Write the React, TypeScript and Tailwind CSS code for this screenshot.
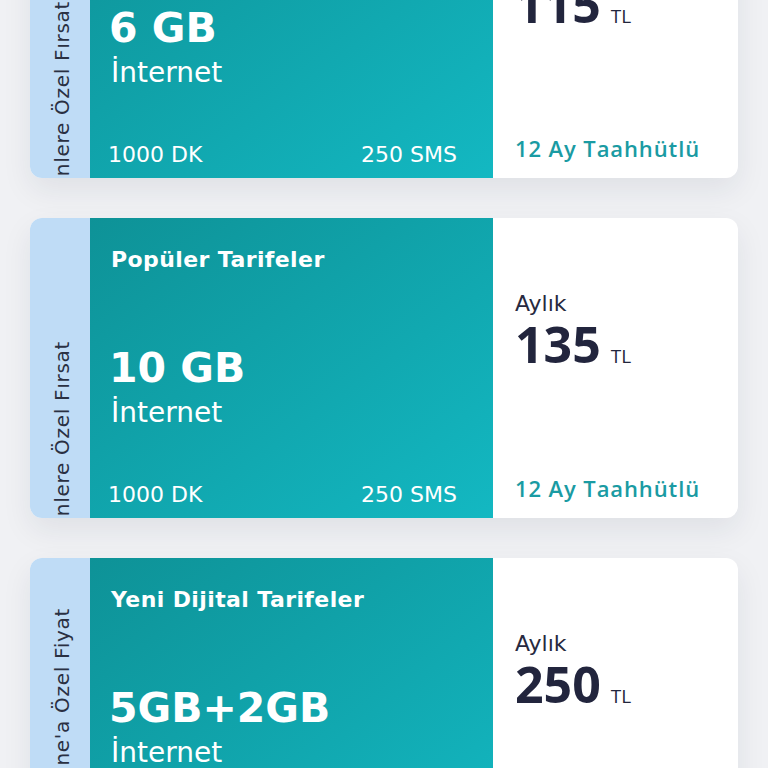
import React from "react";

type Tariff = {
  ribbon: string;
  ribbonTop: number;
  title?: string;
  data: string;
  minutes: string;
  sms: string;
  price: string;
};

const TARIFFS: Tariff[] = [
  {
    ribbon: "Sadece Dijitalde Gelenlere Özel Fırsat",
    ribbonTop: 123,
    title: "",
    data: "6 GB",
    minutes: "1000 DK",
    sms: "250 SMS",
    price: "115",
  },
  {
    ribbon: "Sadece Dijitalde Gelenlere Özel Fırsat",
    ribbonTop: 123,
    title: "Popüler Tarifeler",
    data: "10 GB",
    minutes: "1000 DK",
    sms: "250 SMS",
    price: "135",
  },
  {
    ribbon: "Online'a Özel Fiyat",
    ribbonTop: 50,
    title: "Yeni Dijital Tarifeler",
    data: "5GB+2GB",
    minutes: "1000 DK",
    sms: "250 SMS",
    price: "250",
  },
];

function TariffCard({ t }: { t: Tariff }) {
  return (
    <div className="flex h-[300px] w-[708px] shrink-0 overflow-hidden rounded-[12px] bg-white shadow-[0_12px_30px_rgba(30,40,70,0.08)]">
      <div className="relative w-[60px] shrink-0 overflow-hidden bg-[#bfdcf6]">
        <div
          className="absolute left-[20px] rotate-180 whitespace-nowrap text-[20px] leading-[24px] tracking-[0.7px] text-[#2a3042] [writing-mode:vertical-rl]"
          style={{ top: t.ribbonTop }}
        >
          {t.ribbon}
        </div>
      </div>
      <div className="flex w-[403px] shrink-0 flex-col bg-gradient-to-br from-[#0e9297] to-[#13b8c2] pl-[21px] pr-[36px] pt-[28px] pb-[9px] text-white">
        <div className="h-[28px] text-[22px] font-bold leading-[28px] tracking-[0.4px]">{t.title}</div>
        <div className="-ml-[2px] mt-[71px] text-[41px] font-bold leading-[46px]">{t.data}</div>
        <div className="mt-[5px] text-[28px] leading-[34px]">İnternet</div>
        <div className="mt-auto flex items-baseline justify-between text-[22px] leading-[28px]">
          <span className="-ml-[3px]">{t.minutes}</span>
          <span>{t.sms}</span>
        </div>
      </div>
      <div className="flex flex-1 flex-col pl-[22px] pt-[72px] pb-[16px]">
        <div className="text-[22px] leading-[28px] text-[#272a3f]">Aylık</div>
        <div className="flex items-baseline font-['Open_Sans',sans-serif] text-[#22253d]">
          <span className="text-[50px] font-bold leading-[52px]">{t.price}</span>
          <span className="ml-[10px] text-[19px] leading-[24px]">TL</span>
        </div>
        <div className="mt-auto font-['Open_Sans',sans-serif] text-[22px] font-semibold leading-[28px] tracking-[0.9px] text-[#1a9ba3]">
          12 Ay Taahhütlü
        </div>
      </div>
    </div>
  );
}

export default function App() {
  return (
    <div className="h-[768px] w-[768px] overflow-hidden bg-[#f0f1f4] font-['DejaVu_Sans',sans-serif]">
      <div className="-mt-[122px] flex flex-col gap-[40px] px-[30px]">
        {TARIFFS.map((t, i) => (
          <TariffCard key={i} t={t} />
        ))}
      </div>
    </div>
  );
}
